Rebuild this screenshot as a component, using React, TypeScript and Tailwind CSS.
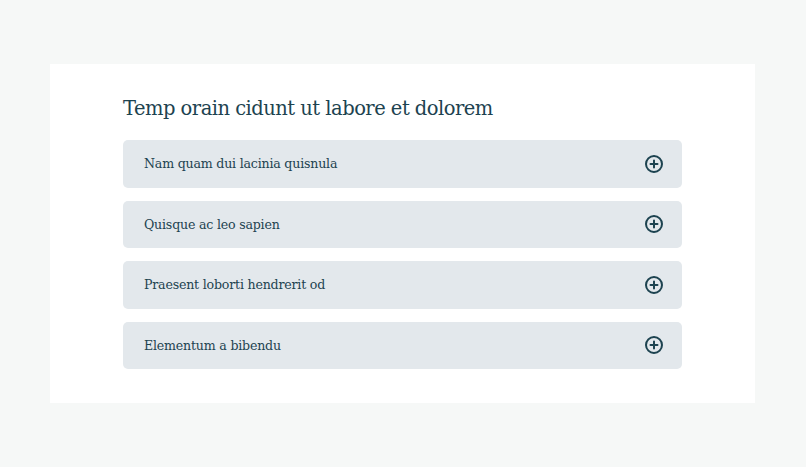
import React from "react";

const items = [
  "Nam quam dui lacinia quisnula",
  "Quisque ac leo sapien",
  "Praesent loborti hendrerit od",
  "Elementum a bibendu",
];

function PlusCircle() {
  return (
    <svg width="20" height="20" viewBox="0 0 20 20" fill="none" stroke="#1d4350" strokeWidth="2" strokeLinecap="round">
      <circle cx="10" cy="10" r="8" />
      <path d="M10 6.5v7M6.5 10h7" />
    </svg>
  );
}

export default function App() {
  return (
    <div className="w-[806px] h-[467px] bg-[#f6f8f7] pt-[64px] pl-[50px]" style={{ fontFamily: '"DejaVu Serif", serif' }}>
      <div className="w-[705px] h-[339px] bg-white pt-[31px] px-[73px]">
        <h1 className="text-[19.5px] leading-[28px] text-[#1d4350] tracking-[-0.52px] mb-[17px]">
          Temp orain cidunt ut labore et dolorem
        </h1>
        <div className="flex flex-col gap-[13px]">
          {items.map((t) => (
            <div key={t} className="h-[47.5px] rounded-[5px] bg-[#e3e8ec] flex items-center justify-between pl-[21px] pr-[18px]">
              <span className="text-[12.6px] text-[#1d4350] tracking-[-0.2px] pt-[2px]">{t}</span>
              <PlusCircle />
            </div>
          ))}
        </div>
      </div>
    </div>
  );
}
